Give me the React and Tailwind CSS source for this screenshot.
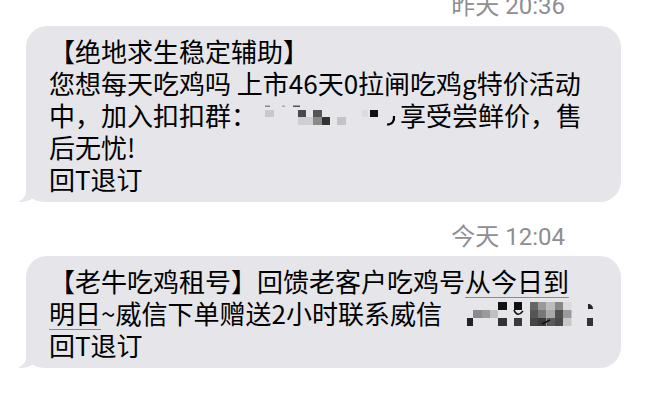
import React from 'react';

const cjk = { fontFamily: '"Noto Sans CJK SC", "Noto Sans", sans-serif' };
const stamp = { fontFamily: 'Roboto, "Noto Sans CJK SC", sans-serif' };

function Tail() {
  return (
    <svg
      className="absolute bottom-0 left-[-8px]"
      width="30"
      height="22"
      viewBox="0 0 30 22"
    >
      <path
        d="M8 0 L8 11 C8 16 5 19.5 0 22 C6 22.4 11 21 14.5 18.6 C18 21 22 22 30 22 L30 0 Z"
        fill="#e5e5ea"
      />
    </svg>
  );
}

function Bubble({ children }) {
  return (
    <div className="relative ml-[26px] w-[595px] rounded-[21px] bg-[#e5e5ea] pl-[23px] pr-[16px] pt-[9px] pb-[7px]">
      <Tail />
      <div className="relative text-[26px] leading-[32px] text-black" style={cjk}>
        {children}
      </div>
    </div>
  );
}

function Stamp({ children, className }) {
  return (
    <div
      className={`pr-[83px] text-right text-[24px] leading-[28px] text-[#8e8e93] ${className}`}
      style={stamp}
    >
      {children}
    </div>
  );
}

function MosaicOne() {
  return (
    <svg className="inline-block align-top" width="143" height="32" viewBox="0 0 143 32">
      <rect x="8" y="6.5" width="5" height="1.5" fill="#888" />
      <rect x="8" y="11" width="9" height="7" fill="#c9c9cd" />
      <rect x="25" y="6.5" width="3" height="1.5" fill="#aaa" />
      <rect x="36" y="6.5" width="7" height="1.5" fill="#555" />
      <rect x="41" y="11" width="8" height="7" fill="#4a4a4a" />
      <rect x="41" y="18" width="15" height="8" fill="#cfcfd3" />
      <rect x="56" y="11" width="9" height="7" fill="#555" />
      <rect x="56" y="18" width="9" height="8" fill="#8a8a8a" />
      <rect x="65" y="18" width="8" height="8" fill="#333" />
      <rect x="80" y="18" width="9" height="8" fill="#c4c4c8" />
      <rect x="105" y="11" width="6" height="7" fill="#dcdce0" />
      <rect x="113" y="11" width="8" height="7" fill="#111" />
      <path d="M137 17 C137.5 22 135.5 25.5 130 25.5" stroke="#000" strokeWidth="2.2" fill="none" />
    </svg>
  );
}

function MosaicTwo() {
  const cols = [
    [88, ['#666', '#555', '#444']],
    [96, ['#9a9a9a', '#777', '#3a3a3a']],
    [105, ['#bdbdbd', '#a8a8a8', '#5a5a5a']],
    [113, ['#888', '#505050', '#4a4a4a']],
    [121, ['#dcdcdc', '#9a9a9a', '#c8c8c8']],
  ];
  return (
    <svg className="inline-block align-top" width="156" height="32" viewBox="0 0 156 32">
      <rect x="25" y="21" width="6" height="8" fill="#222" />
      <rect x="31" y="13" width="9" height="8" fill="#8a8a8a" />
      <rect x="40" y="13" width="8" height="8" fill="#9a9a9a" />
      <rect x="48" y="13" width="8" height="8" fill="#c0c0c4" />
      <rect x="56" y="5" width="9" height="8" fill="#111" />
      <rect x="56" y="21" width="9" height="8" fill="#333" />
      <rect x="72" y="5" width="8" height="8" fill="#111" />
      <rect x="72" y="21" width="8" height="8" fill="#3a3a3a" />
      {cols.map(([x, fills]) => (
        <g key={x}>
          <rect x={x} y="5" width="8.5" height="8" fill={fills[0]} />
          <rect x={x} y="13" width="8.5" height="8" fill={fills[1]} />
          <rect x={x} y="21" width="8.5" height="8" fill={fills[2]} />
        </g>
      ))}
      <path d="M72 13 C74 18 77 19 81 14" stroke="#111" strokeWidth="1.6" fill="none" />
      <path d="M100 27 L108 23" stroke="#111" strokeWidth="1.4" />
      <path d="M146 7 C149 7 151 9 151 12 L146 12 Z" fill="#222" />
      <rect x="145" y="21" width="6" height="8" fill="#333" />
    </svg>
  );
}

export default function App() {
  return (
    <div className="h-[414px] w-[648px] overflow-hidden bg-white">
      <Stamp className="-mt-[8px] mb-[6px]">昨天 20:36</Stamp>

      <Bubble>
        <div className="whitespace-nowrap">【绝地求生稳定辅助】</div>
        <div className="whitespace-nowrap">您想每天吃鸡吗 上市46天0拉闸吃鸡g特价活动</div>
        <div className="whitespace-nowrap">
          中，加入扣扣群：<MosaicOne />享受尝鲜价，售
        </div>
        <div className="whitespace-nowrap">后无忧!</div>
        <div className="whitespace-nowrap">回T退订</div>
      </Bubble>

      <Stamp className="mt-[21px] mb-[5px]">今天 12:04</Stamp>

      <Bubble>
        <div className="whitespace-nowrap">
          【老牛吃鸡租号】回馈老客户吃鸡号
          <span className="underline decoration-[#8a8a8a] decoration-1 underline-offset-[5px]">从今日到</span>
        </div>
        <div className="whitespace-nowrap">
          <span className="underline decoration-[#8a8a8a] decoration-1 underline-offset-[5px]">明日</span>
          ~威信下单赠送2小时联系威信
          <MosaicTwo />
        </div>
        <div className="whitespace-nowrap">回T退订</div>
      </Bubble>
    </div>
  );
}
